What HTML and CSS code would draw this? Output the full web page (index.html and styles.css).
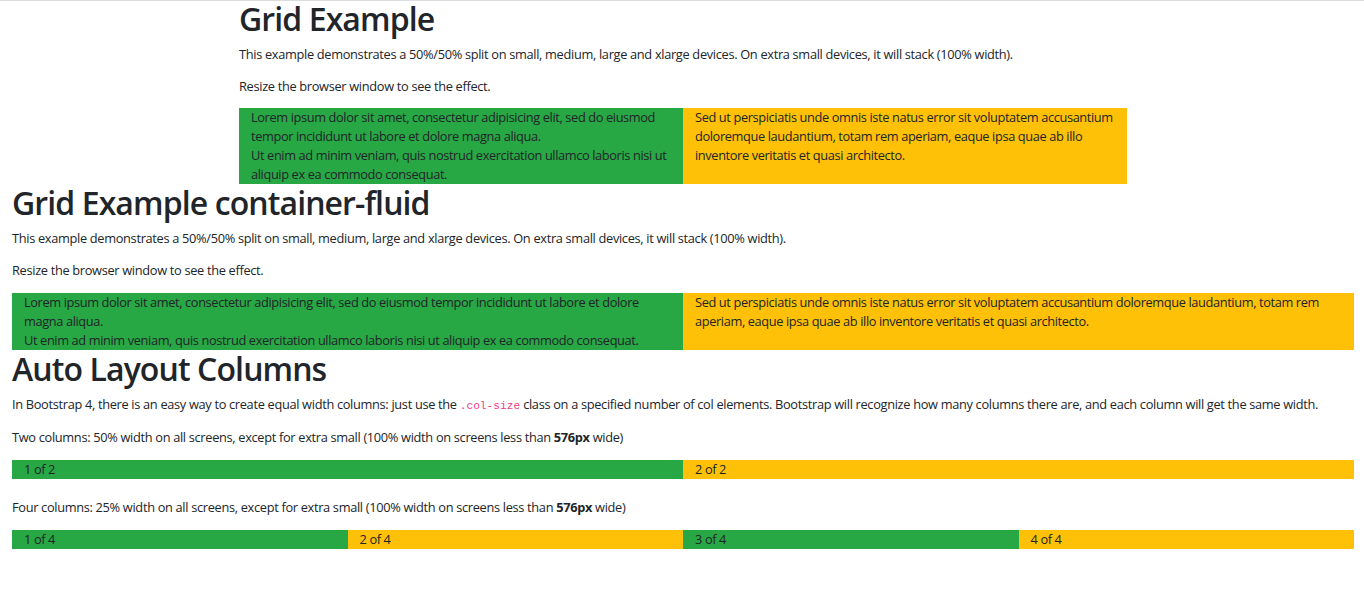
FILE: index.html
```html
<!DOCTYPE html>
<html lang="en">
<head>
    <meta charset="UTF-8">
    <meta name="viewport" content="width=device-width, initial-scale=1.0">
    <title>Bootstrap Grid Example</title>
    <link rel="stylesheet" href="styles.css">
</head>
<body>
    <div class="container">
        <h1>Grid Example</h1>
        <p>This example demonstrates a 50%/50% split on small, medium, large and xlarge devices. On extra small devices, it will stack (100% width).</p>
        <p>Resize the browser window to see the effect.</p>
        <div class="row">
            <div class="col bg-success">Lorem ipsum dolor sit amet, consectetur adipisicing elit, sed do eiusmod tempor incididunt ut labore et dolore magna aliqua.<br>Ut enim ad minim veniam, quis nostrud exercitation ullamco laboris nisi ut aliquip ex ea commodo consequat.</div>
            <div class="col bg-warning">Sed ut perspiciatis unde omnis iste natus error sit voluptatem accusantium doloremque laudantium, totam rem aperiam, eaque ipsa quae ab illo inventore veritatis et quasi architecto.</div>
        </div>
    </div>

    <div class="container-fluid">
        <h1>Grid Example container-fluid</h1>
        <p>This example demonstrates a 50%/50% split on small, medium, large and xlarge devices. On extra small devices, it will stack (100% width).</p>
        <p>Resize the browser window to see the effect.</p>
        <div class="row">
            <div class="col bg-success">Lorem ipsum dolor sit amet, consectetur adipisicing elit, sed do eiusmod tempor incididunt ut labore et dolore magna aliqua.<br>Ut enim ad minim veniam, quis nostrud exercitation ullamco laboris nisi ut aliquip ex ea commodo consequat.</div>
            <div class="col bg-warning">Sed ut perspiciatis unde omnis iste natus error sit voluptatem accusantium doloremque laudantium, totam rem aperiam, eaque ipsa quae ab illo inventore veritatis et quasi architecto.</div>
        </div>
    </div>

    <div class="container-fluid">
        <h1>Auto Layout Columns</h1>
        <p>In Bootstrap 4, there is an easy way to create equal width columns: just use the <code>.col-size</code> class on a specified number of col elements. Bootstrap will recognize how many columns there are, and each column will get the same width.</p>
        <p>Two columns: 50% width on all screens, except for extra small (100% width on screens less than <strong>576px</strong> wide)</p>
        <div class="row">
            <div class="col bg-success">1 of 2</div>
            <div class="col bg-warning">2 of 2</div>
        </div>
        <br>
        <p>Four columns: 25% width on all screens, except for extra small (100% width on screens less than <strong>576px</strong> wide)</p>
        <div class="row">
            <div class="col bg-success">1 of 4</div>
            <div class="col bg-warning">2 of 4</div>
            <div class="col bg-success">3 of 4</div>
            <div class="col bg-warning">4 of 4</div>
        </div>
    </div>
</body>
</html>
```

FILE: styles.css
```css
body {
    margin: 0;
    font-family: "Open Sans", "Noto Sans", sans-serif;
    font-size: 12.8px;
    line-height: 19px;
    letter-spacing: -0.32px;
    color: #212529;
    background-color: #fff;
    box-shadow: inset 0 1px 0 #dadce0;
}

h1 {
    margin: 0 0 6.4px;
    font-size: 32px;
    font-weight: 600;
    line-height: 38.4px;
    letter-spacing: -0.9px;
}

p {
    margin: 0 0 12.8px;
}

code {
    font-family: "Liberation Mono", monospace;
    font-size: 11.2px;
    letter-spacing: 0;
    color: #e83e8c;
}

strong {
    font-weight: bold;
}

.container {
    width: 888px;
    padding: 0 11px 0 13px;
    margin: 0 auto;
}

.container-fluid {
    padding: 0 10px 0 12px;
}

.row {
    display: flex;
}

.col {
    flex: 1 1 0;
    padding: 0 12px;
    letter-spacing: -0.38px;
}

.bg-success {
    background-color: #28a745;
}

.bg-warning {
    background-color: #ffc107;
}
```
